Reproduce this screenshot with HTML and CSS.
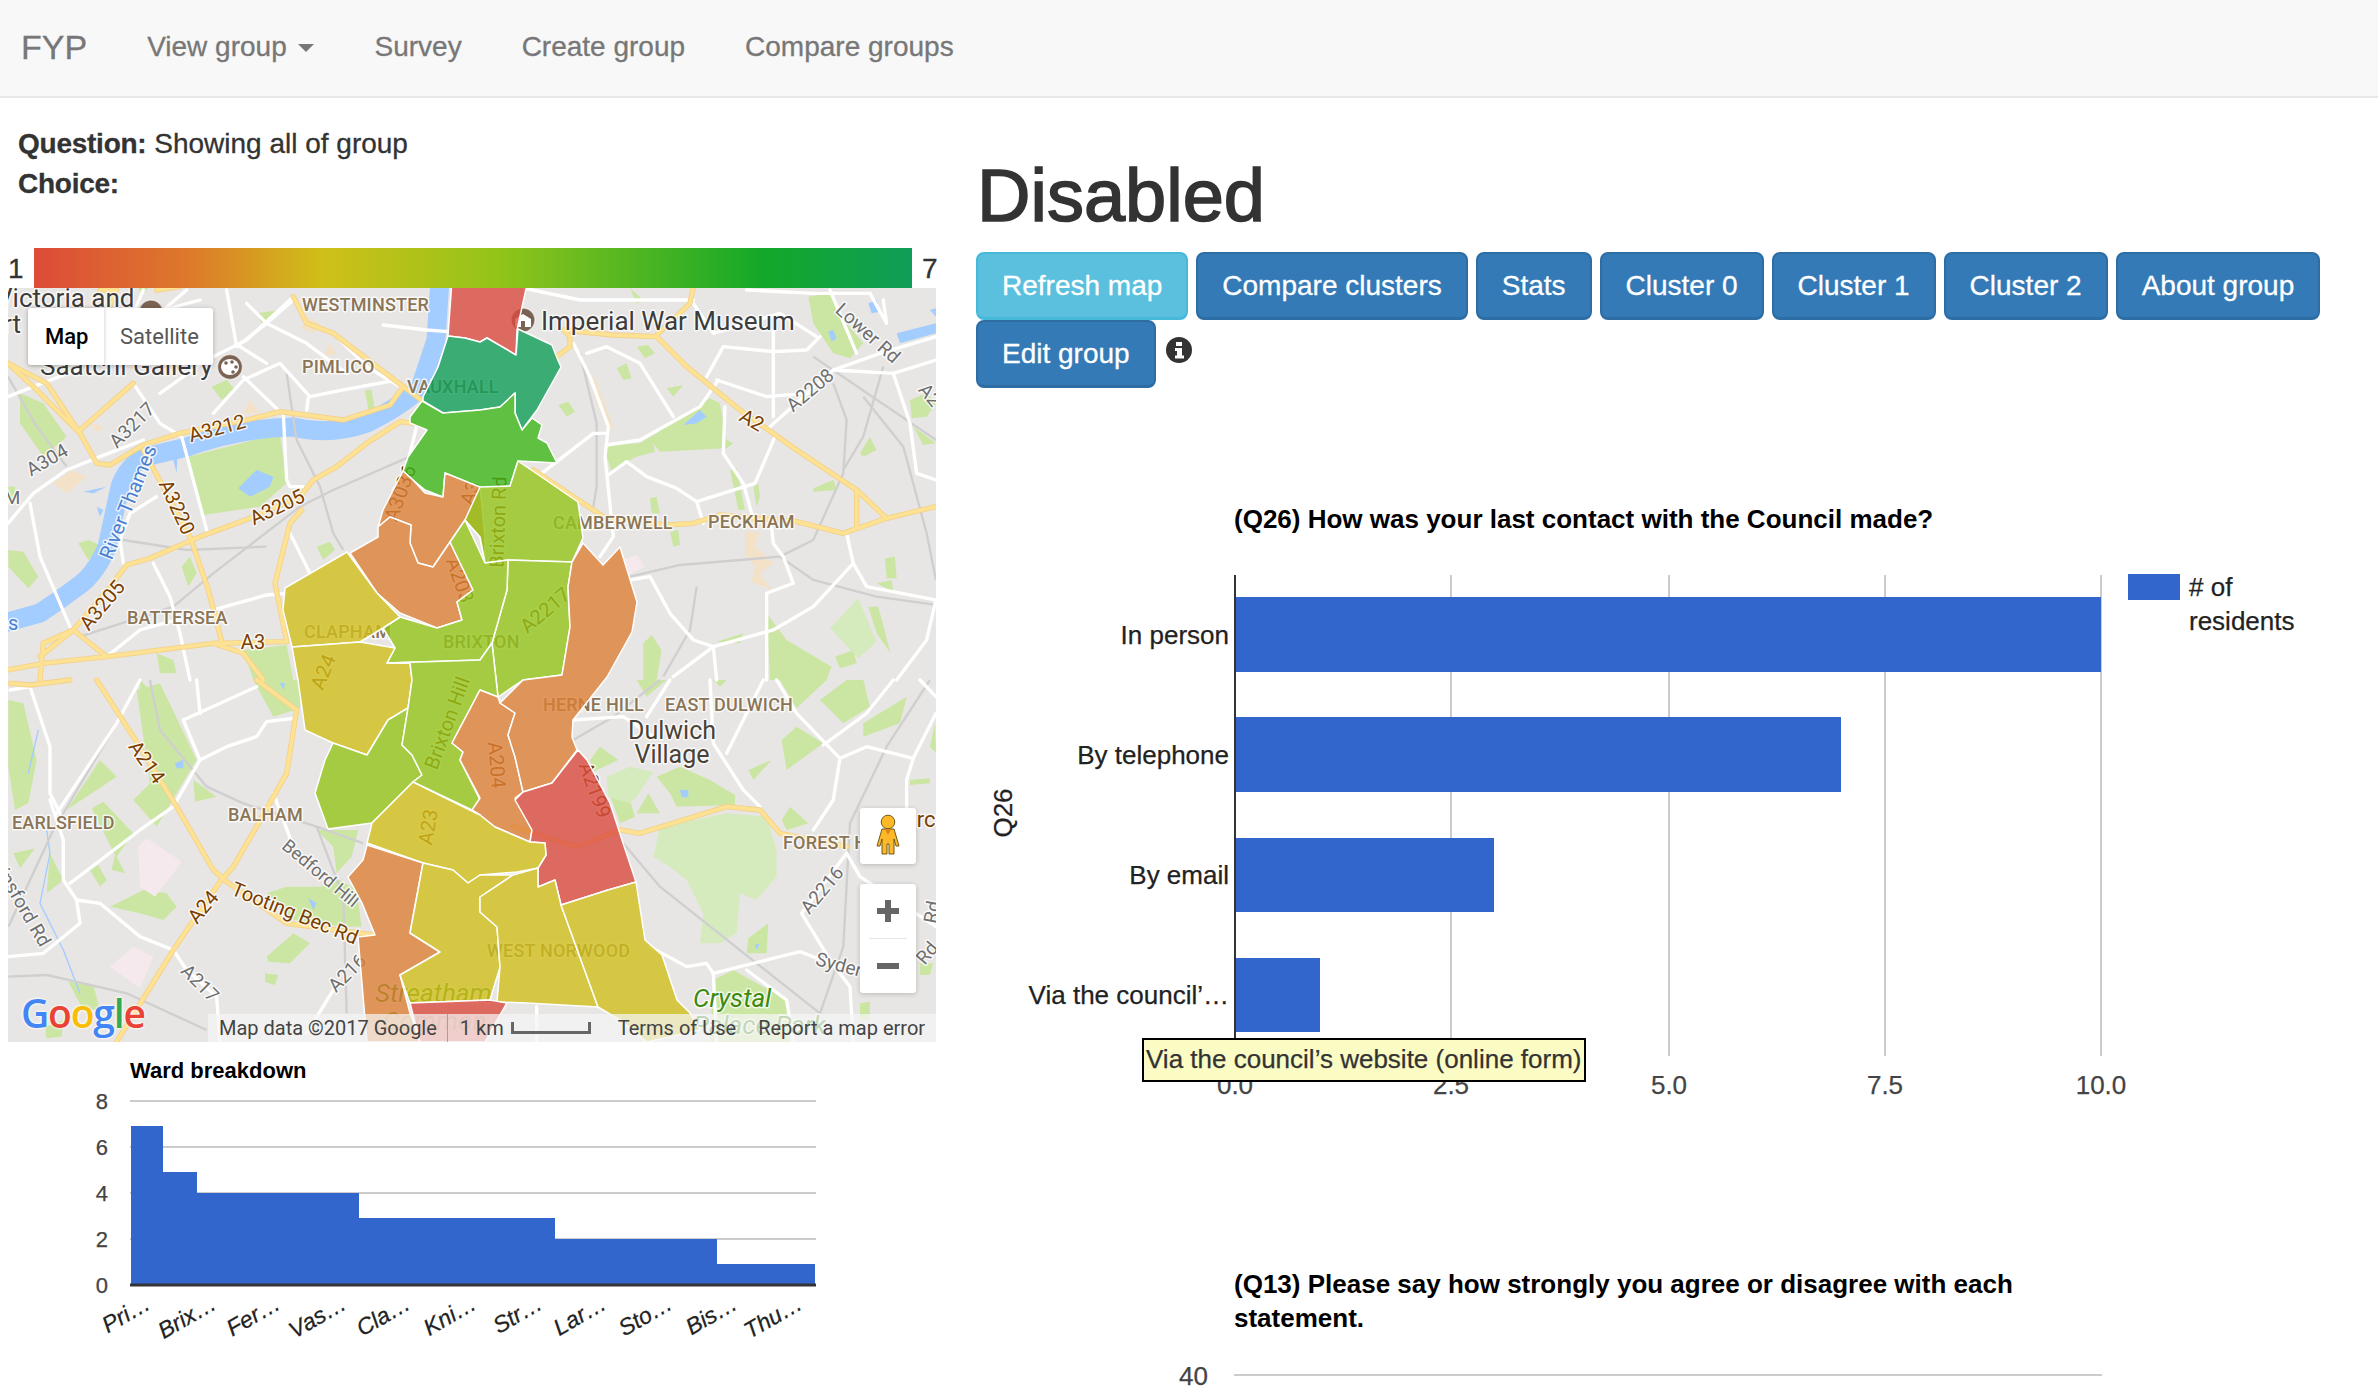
FILE: index.html
```html
<!DOCTYPE html>
<html lang="en">
<head>
<meta charset="utf-8">
<title>FYP</title>
<link rel="stylesheet" href="styles.css">
</head>
<body>
<nav class="navbar">
  <a class="brand">FYP</a>
  <a class="nav-link">View group <span class="caret"></span></a>
  <a class="nav-link">Survey</a>
  <a class="nav-link">Create group</a>
  <a class="nav-link">Compare groups</a>
</nav>
<main class="page">
  <section class="left">
    <div class="info">
      <div><b>Question:</b> Showing all of group</div>
      <div><b>Choice:</b></div>
    </div>
    <div class="scale"><span class="scale-min">1</span><div class="scale-bar"></div><span class="scale-max">7</span></div>
    <div class="map">
      <svg class="map-svg" width="928" height="754" viewBox="8 288 928 754" xmlns="http://www.w3.org/2000/svg">
        <defs>
          <g id="aroads">
            <g transform="translate(0,280) scale(.3333)">
              <path d="M24,250 L140,310 L240,460 L290,550 L330,555 L430,495 L540,460 L740,420 L840,395 L1030,420 L1170,375 L1210,320"/>
              <path d="M1240,430 L1200,425 L1100,490 L1010,560 L940,600 L900,650 L750,715 L600,770 L450,835 L380,855 L330,920 L220,1050 L130,1090 L120,1200"/>
              <path d="M430,510 L500,640 L570,770 L625,930 L665,1085"/>
              <path d="M120,1130 L220,1050 L320,1130 M320,1130 L640,1090 L860,1085 L825,910 L870,730 L905,690"/>
              <path d="M880,50 L920,130 L1000,160 L1210,320 L1270,365"/>
              <path d="M400,310 L240,450 M240,460 L100,320 L24,250"/>
              <path d="M640,1090 L730,1120 L790,1200"/>
              <path d="M24,1170 L130,1150 L320,1130"/>
              <path d="M470,30 L540,20 M300,30 L350,30 L320,100"/>
            </g>
            <g transform="translate(480,280) scale(.3333)">
              <path d="M230,230 L270,200 L270,170 L250,150 L400,165 L530,170 L620,260 L780,390 L950,510 L1130,630 L1220,715 L1368,680"/>
              <path d="M160,570 L370,710 L560,735 L640,730 L720,705 L950,725 L1090,760 L1220,715"/>
              <path d="M1130,630 L1130,740"/>
              <path d="M640,20 L630,70 L530,165"/>
            </g>
            <g transform="translate(0,680) scale(.3333)">
              <path d="M290,0 L400,170 L530,380 L640,570 L680,605 L860,730 L1120,765"/>
              <path d="M770,0 L890,90 L860,280 L770,440 L700,560 L660,605 L520,810 L350,1085"/>
              <path d="M30,10 L90,15 L210,0"/>
            </g>
            <g transform="translate(480,680) scale(.3333)">
              <path d="M420,450 L480,460 L740,380 L840,390 L900,460 L1100,500"/>
              <path d="M100,440 L290,500 L420,450"/>
            </g>
          </g>
        </defs>
        <rect class="base" x="8" y="288" width="928" height="754"/>

        <g class="park">
          <g transform="translate(0,280) scale(.3333)">
            <path d="M565,530 L840,460 L860,610 L780,680 L610,705Z"/>
            <path d="M60,340 L130,370 L200,470 L130,530 L60,430Z"/>
            <path d="M635,320 L680,300 L705,330 L665,360Z"/>
            <path d="M25,810 L70,815 L115,890 L85,925 L25,860Z"/>
            <path d="M235,790 L265,780 L310,800 L265,840Z"/>
            <path d="M950,800 L990,785 L1005,810 L970,840Z"/>
            <path d="M545,860 L570,830 L590,880 L565,920Z"/>
            <path d="M730,1110 L860,1095 L880,1200 L760,1200Z"/>
            <path d="M470,1120 L520,1140 L530,1180 L480,1180Z"/>
            <path d="M1095,330 L1115,330 L1125,390 L1105,390Z"/>
            <path d="M25,620 L45,620 L45,660 L25,660Z"/>
            <path d="M415,24 L445,24 L425,45Z"/>
            <path d="M770,100 L840,90 L790,140Z"/>
          </g>
          <g transform="translate(480,280) scale(.3333)">
            <path d="M985,50 L1050,40 L1100,130 L1150,190 L1110,235 L1060,220 L1000,130Z"/>
            <path d="M470,200 L505,195 L525,220 L495,235Z"/>
            <path d="M410,265 L440,250 L455,295 L430,300Z"/>
            <path d="M560,325 L610,315 L580,350Z"/>
            <path d="M235,375 L265,365 L285,395 L260,410Z"/>
            <path d="M380,495 L480,490 L530,460 L555,440 L690,355 L720,370 L725,400 L740,480 L760,490 L740,505 L540,515 L520,490 L525,515 L470,530 L440,545 L395,575 L380,530Z"/>
            <path d="M510,655 L530,650 L540,700 L515,700Z"/>
            <path d="M570,755 L595,750 L600,795 L580,800Z"/>
            <path d="M750,570 L770,565 L795,690 L775,690Z"/>
            <path d="M820,620 L835,610 L840,650 L830,680Z"/>
            <path d="M1000,625 L1060,600 L1070,630 L1000,635Z"/>
            <path d="M1290,360 L1340,340 L1368,370 L1340,410 L1295,415Z"/>
            <path d="M1300,440 L1368,490 L1330,495Z"/>
            <path d="M1170,470 L1190,510 L1150,530 L1140,520Z"/>
            <path d="M1215,835 L1245,830 L1250,895 L1220,895Z"/>
            <path d="M1190,910 L1235,900 L1240,935Z"/>
            <path d="M1165,980 L1195,980 L1232,1120 L1190,1060Z"/>
            <path d="M1065,1130 L1120,1110 L1130,1150 L1080,1165Z"/>
            <path d="M860,1000 L920,1080 L1055,1160 L1040,1200 L870,1200Z"/>
            <path d="M490,1090 L515,1065 L545,1110 L530,1200 L490,1200Z"/>
            <path d="M710,1085 L790,1060 L780,1090Z"/>
            <path d="M450,24 L490,60 L470,70Z"/>
          </g>
          <g transform="translate(0,680) scale(.3333)">
            <path d="M25,60 L70,70 L110,240 L85,370 L45,390 L25,260Z"/>
            <path d="M410,30 L480,10 L590,240 L530,340 L470,440 L400,360 L450,310Z"/>
            <path d="M580,300 L650,350 L585,365Z"/>
            <path d="M200,390 L300,240 L350,290Z"/>
            <path d="M275,385 L310,365 L400,460 L350,530 L375,580 L335,570 L345,525Z"/>
            <path d="M270,570 L295,555 L320,600 L300,620Z"/>
            <path d="M330,680 L430,630 L500,640 L530,680 L490,720 L420,700Z"/>
            <path d="M800,640 L860,620 L960,620 L1020,600 L1070,630 L1085,740 L1030,740 L880,720Z"/>
            <path d="M800,830 L880,760 L930,790 L870,850 L805,845Z"/>
            <path d="M795,880 L835,885 L825,915 L795,905Z"/>
            <path d="M950,450 L1075,450 L1055,530 L1010,580 L1000,500Z"/>
            <path d="M760,0 L900,0 L900,85 L820,110Z"/>
            <path d="M150,520 L190,600 L140,640Z"/>
            <path d="M40,520 L105,505 L60,565Z"/>
            <path d="M205,905 L280,915 L300,990 L250,990Z"/>
            <path d="M135,1040 L190,1020 L185,1070 L140,1075Z"/>
            <path d="M420,0 L450,30 L420,60Z"/>
          </g>
          <g transform="translate(480,680) scale(.3333)">
            <path d="M530,290 L600,260 L690,300 L765,345 L765,375 L590,380 L570,340Z"/>
            <path d="M330,240 L360,200 L415,240 L340,275Z"/>
            <path d="M390,345 L445,345 L465,410 L420,430Z"/>
            <path d="M470,400 L505,340 L540,400Z"/>
            <path d="M805,775 L865,730 L860,820 L800,820Z"/>
            <path d="M905,180 L950,140 L1030,190 L920,270Z"/>
            <path d="M805,270 L875,240 L820,300Z"/>
            <path d="M1020,60 L1100,0 L1150,0 L1170,80 L1090,130Z"/>
            <path d="M1150,130 L1280,50 L1260,130 L1150,170Z"/>
            <path d="M900,0 L1040,0 L950,85Z"/>
            <path d="M1290,300 L1350,295 L1350,310 L1290,315Z"/>
            <path d="M905,420 L930,380 L985,430 L920,450Z"/>
            <path d="M700,900 L760,870 L920,960 L930,1085 L690,1085Z"/>
            <path d="M1140,970 L1170,965 L1170,1020 L1140,1020Z"/>
            <path d="M1320,850 L1360,850 L1350,885 L1320,885Z"/>
            <path d="M1365,130 L1350,200 L1368,220Z"/>
            <path d="M470,0 L560,0 L500,50Z"/>
            <path d="M700,0 L740,0 L720,20Z"/>
          </g>
        </g>
        <g class="park-pale">
          <g transform="translate(480,280) scale(.3333)">
            <path d="M1050,1045 L1135,955 L1190,1085 L1135,1135Z"/>
          </g>
          <g transform="translate(480,680) scale(.3333)">
            <path d="M380,290 L450,260 L520,275 L470,350 L450,370 L385,350Z"/>
            <path d="M540,440 L740,400 L860,410 L890,510 L890,590 L830,660 L780,640 L770,760 L720,790 L660,790 L670,700 L620,600 L570,560 L520,530Z"/>
          </g>
        </g>
        <g class="pink">
          <g transform="translate(0,680) scale(.3333)">
            <path d="M415,500 L440,475 L545,545 L520,580 L465,650 L420,620Z"/>
            <path d="M330,860 L400,800 L460,830 L420,925Z"/>
          </g>
          <g transform="translate(480,280) scale(.3333)">
            <path d="M425,840 L470,825 L495,860 L445,885Z"/>
          </g>
        </g>
        <g class="sand">
          <g transform="translate(480,280) scale(.3333)">
            <path d="M795,755 L840,755 L825,800 L860,830 L880,850 L840,880 L875,930 L815,905 L825,860 L795,820Z"/>
            <path d="M340,280 L400,440 L385,455 L340,340Z"/>
          </g>
          <g transform="translate(0,280) scale(.3333)">
            <path d="M920,110 L960,130 L945,160 L905,145Z"/>
            <path d="M985,190 L1010,220 L975,230Z"/>
            <path d="M215,570 L260,590 L200,640 L160,610Z"/>
            <path d="M270,430 L310,440 L290,460Z"/>
            <path d="M750,360 L780,400 L730,400Z"/>
          </g>
        </g>

        <path class="water" d="M440,280 L436,340 L420,388 Q403,405 367,423 Q330,436 293,427 Q240,428 187,447 Q150,456 143,457 Q125,470 120,487 L107,547 Q95,575 77,587 Q60,600 40,613 L0,624"/>
        <g class="lake">
          <g transform="translate(0,280) scale(.3333)">
            <path d="M715,625 L770,570 L820,590 L810,620 L750,650Z"/>
            <path d="M250,635 L320,620 L280,640Z"/>
            <path d="M290,680 L310,690 L300,710Z"/>
            <path d="M520,540 L532,535 L530,580Z"/>
          </g>
          <g transform="translate(480,280) scale(.3333)">
            <path d="M610,435 L660,390 L680,410 L650,430Z"/>
            <path d="M1165,70 L1190,60 L1200,95 L1175,100Z"/>
            <path d="M1250,160 L1368,130 L1368,160 L1260,190Z"/>
            <path d="M1045,155 L1060,150 L1070,175 L1055,185Z"/>
            <path d="M1350,90 L1368,85 L1368,110Z"/>
          </g>
          <g transform="translate(0,680) scale(.3333)">
            <path d="M840,8 L855,10 L850,30Z"/>
            <path d="M525,250 L550,240 L550,265 L530,265Z"/>
            <path d="M925,655 L950,670 L940,690Z"/>
          </g>
          <g transform="translate(480,680) scale(.3333)">
            <path d="M600,330 L625,330 L625,352 L605,352Z"/>
            <path d="M825,795 L840,790 L830,810Z"/>
          </g>
        </g>
        <g class="stream">
          <g transform="translate(0,680) scale(.3333)">
            <path d="M115,150 L85,280"/>
            <path d="M140,450 L150,520 L120,670 L190,810 L240,940"/>
          </g>
        </g>

        <g class="rail">
          <g transform="translate(0,280) scale(.3333)">
            <path d="M860,280 L890,480 L960,620 L1000,760 L1030,810"/>
            <path d="M1230,530 L1000,630 L900,680 L640,880 L520,980 L240,1070"/>
            <path d="M24,290 L110,440 L200,560"/>
            <path d="M370,780 L560,810 L800,800"/>
          </g>
          <g transform="translate(480,280) scale(.3333)">
            <path d="M1000,230 L1368,480"/>
            <path d="M300,220 L350,430 L350,620 L340,680"/>
            <path d="M1060,310 L1100,420 L1090,580 L1000,780 L900,830 L600,855 L450,890"/>
            <path d="M1210,260 L1150,470 L1090,570"/>
            <path d="M1150,350 L1270,500 L1340,760 L1368,900"/>
            <path d="M650,920 L630,1050 L550,1190"/>
            <path d="M900,830 L1000,900 L1190,950 L1368,975"/>
          </g>
          <g transform="translate(0,680) scale(.3333)">
            <path d="M450,0 L480,150 L620,320 L730,370 L950,440 L1090,490"/>
            <path d="M350,130 L160,450 L25,740"/>
            <path d="M25,890 L140,885 L380,940 L620,1050"/>
            <path d="M950,440 L1030,650 L1040,1000"/>
          </g>
          <g transform="translate(480,680) scale(.3333)">
            <path d="M1350,0 L1220,200 L1110,430 L1090,800 L1020,1000"/>
            <path d="M430,490 L540,620 L830,850 L1020,1000"/>
            <path d="M280,180 L400,110 L540,0"/>
          </g>
        </g>

        <g class="road">
          <g transform="translate(0,280) scale(.3333)">
            <path d="M24,350 L100,320 L230,270"/>
            <path d="M400,310 L480,430 L545,470 L620,750"/>
            <path d="M24,730 L100,640 L200,570 L300,530 L430,480"/>
            <path d="M90,670 L120,830 L210,1040"/>
            <path d="M370,850 L360,780 L390,700 L470,650"/>
            <path d="M460,850 L510,950 L540,1060 L570,1200"/>
            <path d="M850,400 L860,600 L870,620 L910,620"/>
            <path d="M640,400 L730,300 L840,250 L930,350 L1030,330 L1190,300"/>
            <path d="M920,390 L925,355"/>
            <path d="M730,290 L840,395"/>
            <path d="M870,760 L930,880"/>
            <path d="M860,940 L800,945 L640,990 L420,1050 L320,1130"/>
            <path d="M680,30 L710,200 L800,130 L880,60"/>
            <path d="M1000,160 L1100,260 L1200,320"/>
            <path d="M740,70 L800,130 L920,190 L1040,280"/>
            <path d="M480,340 L620,240 L740,180 L880,50"/>
            <path d="M430,30 L400,100"/>
            <path d="M720,200 L800,250"/>
            <path d="M1150,135 L1280,150 L1345,155"/>
            <path d="M1250,440 L1230,520 L1215,570"/>
            <path d="M560,30 L490,90 L600,60"/>
          </g>
          <g transform="translate(480,280) scale(.3333)">
            <path d="M280,190 L330,290 L385,440 L375,530 L400,770 L360,830"/>
            <path d="M185,580 L340,460 L380,460"/>
            <path d="M380,495 L480,480 L660,380 L715,300"/>
            <path d="M320,220 L380,200 L480,250 L580,410"/>
            <path d="M710,300 L860,350 L980,340"/>
            <path d="M730,200 L680,290"/>
            <path d="M730,200 L880,215 L980,210 L1020,170"/>
            <path d="M880,150 L880,410"/>
            <path d="M1010,170 L900,100 L700,160 L640,70"/>
            <path d="M885,470 L825,610 L650,665 L590,625 L500,590 L440,545 L385,585"/>
            <path d="M650,665 L670,730"/>
            <path d="M735,380 L730,520 L790,610 L815,700"/>
            <path d="M870,440 L1060,270 L1200,220 L1368,170"/>
            <path d="M1060,270 L1240,280 L1368,240"/>
            <path d="M1120,850 L1000,980 L880,1050 L700,1100 L580,1190"/>
            <path d="M1120,850 L1160,920 L1368,960"/>
            <path d="M1100,760 L1120,850"/>
            <path d="M450,900 L510,890 L570,1000 L640,1080 L700,1100 L710,1200"/>
            <path d="M860,1200 L860,940 L940,910 L910,830 L880,790 L875,740"/>
            <path d="M1240,280 L1290,430 L1310,580 L1368,600"/>
            <path d="M1368,960 L1340,1080 L1250,1200"/>
            <path d="M1130,220 L1050,30"/>
            <path d="M1170,40 L1220,130 L1210,60"/>
            <path d="M130,24 L300,60 L640,60"/>
            <path d="M800,30 L1000,40 L1170,40"/>
          </g>
          <g transform="translate(0,680) scale(.3333)">
            <path d="M30,30 L90,20 L150,200 L150,340 L180,400"/>
            <path d="M150,360 L190,480 L190,600 L230,660 L300,670 L420,770 L520,810 L560,870 L650,950 L660,1085"/>
            <path d="M550,120 L770,20"/>
            <path d="M550,120 L600,240 L520,380 L420,450 L210,610"/>
            <path d="M600,240 L680,200 L770,170 L800,125 L880,115"/>
            <path d="M820,340 L880,500"/>
            <path d="M230,660 L240,730 L130,820 L25,830"/>
            <path d="M170,400 L350,130 L420,0"/>
            <path d="M590,0 L600,100"/>
            <path d="M1000,930 L920,1060"/>
          </g>
          <g transform="translate(480,680) scale(.3333)">
            <path d="M280,120 L430,110 L520,170"/>
            <path d="M500,110 L570,0"/>
            <path d="M690,0 L700,190 L790,330 L840,380"/>
            <path d="M850,0 L740,220"/>
            <path d="M890,0 L950,100 L1080,235 L1160,200 L1300,235 L1368,100"/>
            <path d="M1080,235 L1060,360 L1000,450"/>
            <path d="M1030,195 L1160,100 L1240,0"/>
            <path d="M1300,235 L1280,300 L1280,400"/>
            <path d="M510,800 L620,860 L680,850 L700,880 L960,815 L1050,850 L1140,870"/>
            <path d="M700,880 L710,1085"/>
            <path d="M800,870 L920,960 L940,1085"/>
            <path d="M965,700 L1050,840 L1110,920 L1120,1085"/>
            <path d="M965,700 L1100,520"/>
            <path d="M1100,520 L1140,590 L1368,740"/>
            <path d="M170,980 L170,1085"/>
            <path d="M1320,0 L1368,50"/>
          </g>
        </g>
        <use href="#aroads" class="aroad-edge"/>
        <use href="#aroads" class="aroad"/>

        <circle class="poi" cx="151" cy="312" r="12"/>
        <circle class="poi" cx="230" cy="367" r="12.5"/>
        <ellipse class="poi-white" cx="230" cy="367" rx="9" ry="8"/>
        <circle class="poi-hole" cx="226" cy="363" r="1.8"/><circle class="poi-hole" cx="232" cy="362" r="1.8"/><circle class="poi-hole" cx="236" cy="367" r="1.8"/><circle class="poi-hole" cx="233" cy="372" r="1.8"/>
        <circle class="poi" cx="523" cy="320" r="12"/>
        <path class="poi-white" d="M515,319 L523,314 L531,319 L531,327 L515,327Z"/>
        <rect class="poi-hole" x="521" y="321" width="4" height="6"/>

        <text class="lbl-place" x="-4" y="307">Victoria and</text>
        <text class="lbl-place" x="-14" y="333">Art</text>
        <text class="lbl-place" x="40" y="375">Saatchi Gallery</text>
        <text class="lbl-place" x="541" y="330">Imperial War Museum</text>
        <text class="lbl-village" x="672" y="739">Dulwich</text>
        <text class="lbl-village" x="672" y="763">Village</text>
        <text class="lbl-park" x="693" y="1007">Crystal</text>
        <text class="lbl-park" x="693" y="1034">Palace Park</text>
        <text class="lbl-park lbl-park-dark" x="375" y="1002">Streatham</text>
        <text class="lbl-park lbl-park-dark" x="383" y="1030">Common</text>

        <text class="lbl-hood" x="302" y="311">WESTMINSTER</text>
        <text class="lbl-hood" x="302" y="373">PIMLICO</text>
        <text class="lbl-hood" x="407" y="393">VAUXHALL</text>
        <text class="lbl-hood" x="127" y="624">BATTERSEA</text>
        <text class="lbl-hood" x="304" y="638">CLAPHAM</text>
        <text class="lbl-hood" x="443" y="648">BRIXTON</text>
        <text class="lbl-hood" x="553" y="529">CAMBERWELL</text>
        <text class="lbl-hood" x="708" y="528">PECKHAM</text>
        <text class="lbl-hood" x="12" y="829">EARLSFIELD</text>
        <text class="lbl-hood" x="228" y="821">BALHAM</text>
        <text class="lbl-hood" x="543" y="711">HERNE HILL</text>
        <text class="lbl-hood" x="665" y="711">EAST DULWICH</text>
        <text class="lbl-hood" x="783" y="849">FOREST HILL</text>
        <text class="lbl-hood" x="487" y="957">WEST NORWOOD</text>

        <text class="lbl-shield" transform="rotate(-15 217 428)" x="217" y="428">A3212</text>
        <text class="lbl-shield" transform="rotate(65 177 507)" x="177" y="507">A3220</text>
        <text class="lbl-shield" transform="rotate(-25 277 507)" x="277" y="507">A3205</text>
        <text class="lbl-shield" transform="rotate(-50 102 605)" x="102" y="605">A3205</text>
        <text class="lbl-shield" x="253" y="642">A3</text>
        <text class="lbl-shield" transform="rotate(30 752 420)" x="752" y="420">A2</text>
        <text class="lbl-shield" transform="rotate(55 147 762)" x="147" y="762">A214</text>
        <text class="lbl-shield" transform="rotate(-50 203 907)" x="203" y="907">A24</text>
        <text class="lbl-shield" transform="rotate(22 295 913)" x="295" y="913">Tooting Bec Rd</text>
        <text class="lbl-shield" transform="rotate(-68 323 672)" x="323" y="672">A24</text>
        <text class="lbl-shield" transform="rotate(-80 428 827)" x="428" y="827">A23</text>
        <text class="lbl-shield" transform="rotate(85 497 765)" x="497" y="765">A204</text>
        <text class="lbl-shield" transform="rotate(70 595 790)" x="595" y="790">A2199</text>
        <text class="lbl-shield" transform="rotate(-70 447 723)" x="447" y="723">Brixton Hill</text>
        <text class="lbl-shield" transform="rotate(-88 498 522)" x="498" y="522">Brixton Rd</text>
        <text class="lbl-shield" transform="rotate(-70 400 493)" x="400" y="493">A3036</text>
        <text class="lbl-shield" transform="rotate(-70 470 493)" x="470" y="493">A3</text>
        <text class="lbl-shield" transform="rotate(70 460 580)" x="460" y="580">A203</text>
        <text class="lbl-shield" transform="rotate(-40 545 610)" x="545" y="610">A2217</text>
        <text class="lbl-road" transform="rotate(-45 132 425)" x="132" y="425">A3217</text>
        <text class="lbl-road" transform="rotate(-30 47 460)" x="47" y="460">A304</text>
        <text class="lbl-road" transform="rotate(-40 810 390)" x="810" y="390">A2208</text>
        <text class="lbl-road" transform="rotate(42 868 333)" x="868" y="333">Lower Rd</text>
        <text class="lbl-road" transform="rotate(50 930 395)" x="930" y="395">A2</text>
        <text class="lbl-road lbl-road-sm" transform="rotate(40 321 873)" x="321" y="873">Bedford Hill</text>
        <text class="lbl-road" transform="rotate(45 200 983)" x="200" y="983">A217</text>
        <text class="lbl-road" transform="rotate(-45 347 973)" x="347" y="973">A216</text>
        <text class="lbl-road" transform="rotate(-50 822 890)" x="822" y="890">A2216</text>
        <text class="lbl-road" transform="rotate(15 859 970)" x="859" y="970">Sydenham</text>
        <text class="lbl-road" transform="rotate(-50 927 953)" x="927" y="953">Rd</text>
        <text class="lbl-road" transform="rotate(-80 932 912)" x="932" y="912">Rd</text>
        <text class="lbl-road" transform="rotate(60 20 900)" x="20" y="900">Trinsford Rd</text>
        <text class="lbl-road" x="12" y="497">M</text>
        <text class="lbl-river" transform="rotate(-68 128 502)" x="128" y="502">River Thames</text>
        <text class="lbl-river lbl-river-start" x="-54" y="623">Thames</text>
        <text class="lbl-circus" x="897" y="827">Circus</text>

        <g class="wards">
          <path class="w-red" d="M452,280 L528,280 L517,330 L516,355 L487,338 L480,342 L465,338 L448,336Z"/>
          <path class="w-teal" d="M448,336 L438,367 L423,397 L423,401 L443,413 L480,410 L500,407 L515,393 L515,413 L522,430 L537,410 L561,367 L557,358 L552,345 L518,329 L516,355 L487,338 L480,342 L465,338Z"/>
          <path class="w-green" d="M410,417 L422,401 L443,413 L480,410 L500,407 L515,393 L515,413 L522,430 L532,418 L542,425 L538,438 L547,443 L557,463 L518,461 L510,486 L480,488 L445,473 L443,497 L425,490 L413,480 L403,471 L408,457 L427,430 L410,423Z"/>
          <path class="w-orange" d="M403,471 L413,480 L425,493 L443,497 L445,473 L480,487 L485,537 L485,563 L480,537 L465,520 L450,542 L433,567 L418,563 L410,543 L411,525 L390,517 L378,527 L383,510Z"/>
          <path class="w-orange" d="M450,542 L473,590 L457,602 L462,620 L437,628 L400,613 L377,593 L350,553 L378,537 L378,527 L390,517 L411,525 L410,543 L418,563 L433,567Z"/>
          <path class="w-lime" d="M518,461 L578,502 L583,538 L572,562 L508,560 L485,563 L480,537 L465,520 L480,487 L510,486Z"/>
          <path class="w-lime" d="M508,560 L572,562 L568,587 L570,627 L562,675 L523,680 L498,697 L492,643 L507,590Z"/>
          <path class="w-lime" d="M473,590 L457,602 L462,620 L437,628 L400,617 L383,628 L395,648 L387,663 L480,660 L492,643 L507,590 L508,560 L485,563 L465,520 L450,542Z"/>
          <path class="w-yellow" d="M285,588 L347,552 L377,593 L400,617 L383,628 L360,642 L292,647 L283,610Z"/>
          <path class="w-yellow" d="M292,647 L360,642 L395,648 L387,663 L410,663 L412,680 L408,708 L388,720 L367,755 L333,743 L305,730 L302,708 L298,680Z"/>
          <path class="w-lime" d="M367,755 L388,720 L408,708 L402,745 L412,755 L422,775 L413,782 L372,823 L328,829 L315,793 L325,760 L333,743Z"/>
          <path class="w-lime" d="M412,680 L408,708 L402,745 L412,755 L422,775 L413,782 L472,810 L480,800 L460,760 L463,752 L452,743 L480,690 L498,697 L492,643 L480,660 L387,663 L410,663Z"/>
          <path class="w-orange" d="M480,690 L452,743 L463,752 L460,760 L480,798 L472,810 L480,815 L495,827 L530,842 L532,830 L515,798 L523,792 L515,757 L508,735 L515,713 L500,703 L498,697Z"/>
          <path class="w-orange" d="M583,543 L603,565 L620,547 L637,602 L632,632 L607,677 L573,720 L572,737 L577,750 L552,783 L523,792 L515,757 L508,735 L515,713 L500,703 L523,680 L562,675 L570,627 L568,587 L572,562Z"/>
          <path class="w-red" d="M578,750 L552,783 L523,792 L515,800 L532,830 L530,842 L545,843 L546,855 L538,868 L538,887 L555,880 L561,905 L608,890 L636,882 L623,843 L610,803 L587,760Z"/>
          <path class="w-yellow" d="M413,782 L372,823 L367,843 L423,863 L453,870 L468,883 L480,875 L517,872 L538,868 L546,855 L545,843 L530,842 L495,827 L480,815Z"/>
          <path class="w-orange" d="M367,845 L423,863 L410,933 L440,952 L400,975 L410,1013 L420,1042 L367,1042 L358,937 L375,935 L362,903 L348,877 L363,860Z"/>
          <path class="w-yellow" d="M423,863 L453,870 L468,883 L480,875 L513,875 L480,897 L480,912 L497,927 L500,967 L490,1000 L410,1003 L400,975 L440,952 L410,933Z"/>
          <path class="w-yellow" d="M480,897 L513,875 L538,868 L538,887 L555,880 L561,905 L598,1007 L527,1003 L497,1002 L500,967 L497,927 L480,912Z"/>
          <path class="w-yellow" d="M561,905 L608,890 L636,882 L645,940 L662,955 L677,1000 L690,1013 L700,1030 L647,1042 L620,1020 L598,1007Z"/>
          <path class="w-red" d="M410,1003 L490,1000 L507,1003 L493,1027 L485,1042 L420,1042Z"/>
        </g>
      </svg>

      <div class="map-type"><span class="map-type-on">Map</span><span class="map-type-off">Satellite</span></div>
      <div class="pegman">
        <svg width="56" height="56" viewBox="0 0 56 56" xmlns="http://www.w3.org/2000/svg">
          <circle class="peg-body" cx="28" cy="14" r="6.8"/>
          <path class="peg-body" d="M22,21 L34,21 L39,38 L36,38 L34,31 L34,46 L29,46 L29,36 L27,36 L27,46 L22,46 L22,31 L20,38 L17,38Z"/>
          <path class="peg-tie" d="M25,21 L31,21 L28,27Z"/>
        </svg>
      </div>
      <div class="zoom">
        <div class="zoom-btn"><svg width="22" height="22" viewBox="0 0 22 22" xmlns="http://www.w3.org/2000/svg"><path class="zoom-ico" d="M8,0 H14 V8 H22 V14 H14 V22 H8 V14 H0 V8 H8Z"/></svg></div>
        <div class="zoom-sep"></div>
        <div class="zoom-btn"><svg width="22" height="6" viewBox="0 0 22 6" xmlns="http://www.w3.org/2000/svg"><rect class="zoom-ico" width="22" height="6"/></svg></div>
      </div>
      <div class="google"><span class="g-b">G</span><span class="g-r">o</span><span class="g-y">o</span><span class="g-b">g</span><span class="g-g">l</span><span class="g-r">e</span></div>
      <div class="attrib">
        <span class="attrib-data">Map data ©2017 Google</span>
        <span class="attrib-scale">1 km<span class="scalebar"></span></span>
        <span class="attrib-item">Terms of Use</span>
        <span class="attrib-item">Report a map error</span>
      </div>
    </div>

    <svg class="chart" width="928" height="344" viewBox="8 1042 928 344" xmlns="http://www.w3.org/2000/svg">
      <text class="c-title-sm" x="130" y="1078">Ward breakdown</text>
      <path class="c-grid" d="M130,1101 H816 M130,1147 H816 M130,1193 H816 M130,1239 H816"/>
      <path class="c-bar" d="M131,1285 V1126 H163 V1172 H197 V1193 H359 V1218 H555 V1239 H717 V1264 H815 V1285Z"/>
      <path class="c-axis" d="M130,1285 H816"/>
      <text class="c-tick-sm" x="108" y="1109">8</text>
      <text class="c-tick-sm" x="108" y="1155">6</text>
      <text class="c-tick-sm" x="108" y="1201">4</text>
      <text class="c-tick-sm" x="108" y="1247">2</text>
      <text class="c-tick-sm" x="108" y="1293">0</text>
      <text class="c-xlab" transform="rotate(-30 152 1308)" x="152" y="1308">Pri…</text>
      <text class="c-xlab" transform="rotate(-30 218 1308)" x="218" y="1308">Brix…</text>
      <text class="c-xlab" transform="rotate(-30 282 1308)" x="282" y="1308">Fer…</text>
      <text class="c-xlab" transform="rotate(-30 348 1308)" x="348" y="1308">Vas…</text>
      <text class="c-xlab" transform="rotate(-30 412 1308)" x="412" y="1308">Cla…</text>
      <text class="c-xlab" transform="rotate(-30 478 1308)" x="478" y="1308">Kni…</text>
      <text class="c-xlab" transform="rotate(-30 544 1308)" x="544" y="1308">Str…</text>
      <text class="c-xlab" transform="rotate(-30 608 1308)" x="608" y="1308">Lar…</text>
      <text class="c-xlab" transform="rotate(-30 674 1308)" x="674" y="1308">Sto…</text>
      <text class="c-xlab" transform="rotate(-30 739 1308)" x="739" y="1308">Bis…</text>
      <text class="c-xlab" transform="rotate(-30 804 1308)" x="804" y="1308">Thu…</text>
    </svg>
  </section>

  <section class="right">
    <h1 class="title">Disabled</h1>
    <div class="buttons">
      <a class="btn btn-info">Refresh map</a>
      <a class="btn">Compare clusters</a>
      <a class="btn">Stats</a>
      <a class="btn">Cluster 0</a>
      <a class="btn">Cluster 1</a>
      <a class="btn">Cluster 2</a>
      <a class="btn">About group</a>
      <a class="btn">Edit group</a>
      <svg class="info-icon" width="26" height="26" viewBox="0 0 26 26" xmlns="http://www.w3.org/2000/svg">
        <circle class="info-disc" cx="13" cy="13" r="13"/>
        <path class="info-i" d="M10,5 H16 V9 H10Z M9,11 H16 V18.5 H18 V21.5 H9 V18.5 H11 V14 H9Z"/>
      </svg>
    </div>
    <svg class="chart" width="1402" height="998" viewBox="976 388 1402 998" xmlns="http://www.w3.org/2000/svg">
      <text class="c-title" x="1234" y="528">(Q26) How was your last contact with the Council made?</text>
      <path class="c-vgrid" d="M1451,575 V1056 M1669,575 V1056 M1885,575 V1056 M2101,575 V1056"/>
      <rect class="c-bar" x="1235" y="597" width="866" height="75"/>
      <rect class="c-bar" x="1235" y="717" width="606" height="75"/>
      <rect class="c-bar" x="1235" y="838" width="259" height="74"/>
      <rect class="c-bar" x="1235" y="958" width="85" height="74"/>
      <path class="c-vaxis" d="M1235,575 V1056"/>
      <text class="c-row" x="1229" y="644">In person</text>
      <text class="c-row" x="1229" y="764">By telephone</text>
      <text class="c-row" x="1229" y="884">By email</text>
      <text class="c-row" x="1229" y="1004">Via the council’…</text>
      <text class="c-ylab" transform="rotate(-90 1012 813)" x="1012" y="813">Q26</text>
      <text class="c-tick" x="1235" y="1094">0.0</text>
      <text class="c-tick" x="1451" y="1094">2.5</text>
      <text class="c-tick" x="1669" y="1094">5.0</text>
      <text class="c-tick" x="1885" y="1094">7.5</text>
      <text class="c-tick" x="2101" y="1094">10.0</text>
      <rect class="c-bar" x="2128" y="574" width="52" height="26"/>
      <text class="c-legend" x="2189" y="596">#&#160;of</text>
      <text class="c-legend" x="2189" y="630">residents</text>
      <rect class="c-tip" x="1143" y="1039" width="442" height="42"/>
      <text class="c-tiptext" x="1146" y="1068">Via the council’s website (online form)</text>
      <text class="c-title" x="1234" y="1293">(Q13) Please say how strongly you agree or disagree with each</text>
      <text class="c-title" x="1234" y="1327">statement.</text>
      <path class="c-grid" d="M1234,1375 H2102"/>
      <text class="c-tick-40" x="1208" y="1385">40</text>
    </svg>
  </section>
</main>
</body>
</html>
```
FILE: styles.css
```css
* { box-sizing: border-box; }
html, body { margin: 0; padding: 0; height: 1386px; overflow: hidden; background: #fff; }
body { font-family: "Liberation Sans", Arial, sans-serif; font-size: 28px; line-height: 40px; color: #333; }

.navbar { display: flex; align-items: center; height: 98px; padding: 0 0 3px 21px; background: #f8f8f8; border-bottom: 2px solid #e7e7e7; color: #777; -webkit-text-stroke: .3px #777; }
.brand { font-size: 34px; padding-right: 30px; }
.nav-link { padding: 0 30px; }
.caret { display: inline-block; width: 0; height: 0; margin-left: 4px; vertical-align: middle; border-top: 8px solid #777; border-left: 8px solid transparent; border-right: 8px solid transparent; }

.page { display: flex; align-items: flex-start; }
.left { flex: 0 0 960px; padding-left: 8px; }
.right { flex: 1; padding-left: 16px; }

.info { padding: 26px 0 0 10px; height: 150px; -webkit-text-stroke: .3px #333; }
.info b { font-weight: 700; letter-spacing: -.25px; }
.scale { display: flex; width: 928px; height: 40px; line-height: 42px; -webkit-text-stroke: .3px #333; }
.scale-min { width: 26px; }
.scale-max { width: 24px; padding-left: 10px; }
.scale-bar { width: 878px; background: linear-gradient(to right, #dd4b39 0%, #dd7a2a 18%, #cfc018 33%, #92c41a 53%, #13a829 83%, #0f9d58 100%); }

.map { position: relative; width: 928px; height: 754px; overflow: hidden; font-family: Roboto, "Liberation Sans", sans-serif; }
.map-svg { display: block; }
.base { fill: #e8e6e4; }
.park path { fill: #cbe6a3; }
.park-pale path { fill: #d6ebbd; }
.pink path { fill: #f6e9ee; }
.sand path { fill: #f3e2c8; }
.water { fill: none; stroke: #a3ccff; stroke-width: 19; stroke-linejoin: round; }
.lake path { fill: #a3ccff; }
.stream path { fill: none; stroke: #a3ccff; stroke-width: 4; }
.rail path { fill: none; stroke: #cfcfcf; stroke-width: 7; stroke-linejoin: round; }
.road path { fill: none; stroke: #fff; stroke-width: 10; stroke-linejoin: round; stroke-linecap: round; }
#aroads path { fill: none; stroke-linejoin: round; stroke-linecap: round; }
.aroad-edge { stroke: #f3d08a; stroke-width: 16; }
.aroad { stroke: #fde293; stroke-width: 11; }
.poi { fill: #7b6354; stroke: #fff; stroke-opacity: .6; stroke-width: 1.5; }
.poi-white { fill: #fff; }
.poi-hole { fill: #7b6354; }

.map-svg text { paint-order: stroke; stroke: rgba(255,255,255,.75); stroke-width: 3px; stroke-linejoin: round; font-family: Roboto, "Liberation Sans", sans-serif; }
.lbl-place { font-size: 26px; fill: #3c3c3c; }
.lbl-village { font-size: 25px; fill: #4a4236; text-anchor: middle; }
.lbl-park { font-size: 26px; font-style: italic; fill: #3c8a10; }
.lbl-park-dark { fill: #3c8a10; }
.lbl-hood { font-size: 18px; font-weight: 500; letter-spacing: .2px; fill: #8a7556; }
.lbl-shield { font-size: 20px; fill: #7a3e00; text-anchor: middle; dominant-baseline: central; }
.lbl-road { font-size: 19px; fill: #6f6f6f; text-anchor: middle; dominant-baseline: central; }
.lbl-road-sm { font-size: 18px; }
.lbl-river { font-size: 20px; fill: #4a7fd0; text-anchor: middle; dominant-baseline: central; }
.lbl-river-start { text-anchor: start; }
.lbl-circus { font-size: 22px; fill: #7a3e00; }

.wards path { stroke: #fff; stroke-width: 1.5; stroke-linejoin: round; fill-opacity: .8; }
.w-red { fill: #da4b3e; }
.w-teal { fill: #0f9d58; }
.w-green { fill: #3cb618; }
.w-orange { fill: #dc8036; }
.w-lime { fill: #94c41a; }
.w-yellow { fill: #cfbe1c; }

.map-type { position: absolute; left: 20px; top: 20px; display: flex; height: 57px; background: #fff; border-radius: 3px; box-shadow: 0 1px 5px rgba(0,0,0,.25); font-size: 22px; line-height: 57px; }
.map-type-on { width: 76px; padding-left: 17px; color: #000; font-weight: 500; box-shadow: 1px 0 3px rgba(0,0,0,.15); }
.map-type-off { width: 109px; padding-left: 16px; color: #565656; }
.pegman { position: absolute; left: 852px; top: 520px; width: 56px; height: 56px; background: #fff; border-radius: 3px; box-shadow: 0 1px 5px rgba(0,0,0,.2); }
.pegman svg { display: block; }
.peg-body { fill: #fdb827; stroke: #6f5a18; stroke-width: 1; }
.peg-tie { fill: #e2821b; }
.zoom { position: absolute; left: 852px; top: 596px; width: 56px; height: 109px; background: #fff; border-radius: 3px; box-shadow: 0 1px 5px rgba(0,0,0,.2); display: flex; flex-direction: column; align-items: center; }
.zoom-btn { height: 54px; width: 56px; display: flex; align-items: center; justify-content: center; }
.zoom-sep { width: 38px; height: 1px; background: #e6e6e6; flex: none; }
.zoom-ico { fill: #666; }
.google { position: absolute; left: 13px; top: 697px; font-family: "Open Sans", Roboto, sans-serif; font-size: 39px; line-height: 56px; font-weight: 600; letter-spacing: -1.2px; text-shadow: 0 0 3px #fff, 0 0 3px #fff; }
.g-b { color: #4285f4; }
.g-r { color: #ea4335; }
.g-y { color: #fbbc05; }
.g-g { color: #34a853; }
.attrib { position: absolute; left: 200px; right: 0; top: 726px; height: 28px; display: flex; align-items: center; background: rgba(245,245,245,.72); color: #444; font-size: 20px; line-height: 28px; white-space: nowrap; }
.attrib-data { margin-left: 11px; }
.attrib-scale { display: flex; align-items: center; margin-left: 10px; padding-left: 12px; border-left: 1px solid #d88; }
.scalebar { display: inline-block; width: 80px; height: 12px; margin: 0 0 0 7px; border: 3px solid #666; border-top: 0; }
.attrib-item { margin-left: 27px; }
.attrib-item + .attrib-item { margin-left: 22px; }

.chart { display: block; }
.chart text { font-family: "Liberation Sans", Arial, sans-serif; }
.c-title-sm { font-size: 22px; font-weight: 700; fill: #000; }
.c-title { font-size: 26px; font-weight: 700; fill: #000; }
.c-grid { fill: none; stroke: #ccc; stroke-width: 2; }
.c-axis { fill: none; stroke: #333; stroke-width: 3; }
.c-vgrid { fill: none; stroke: #ccc; stroke-width: 2; }
.c-vaxis { fill: none; stroke: #333; stroke-width: 2; }
.c-bar { fill: #3366cc; }
.c-tick-sm { font-size: 22px; fill: #444; stroke: #444; stroke-width: .25; text-anchor: end; }
.c-xlab { font-size: 23px; font-style: italic; fill: #222; stroke: #222; stroke-width: .25; text-anchor: end; }
.c-tick { font-size: 26px; fill: #444; stroke: #444; stroke-width: .25; text-anchor: middle; }
.c-tick-40 { font-size: 26px; fill: #444; stroke: #444; stroke-width: .25; text-anchor: end; }
.c-row { font-size: 26px; fill: #222; stroke: #222; stroke-width: .25; text-anchor: end; }
.c-ylab { font-size: 26px; fill: #222; stroke: #222; stroke-width: .25; text-anchor: middle; }
.c-legend { font-size: 26px; fill: #222; stroke: #222; stroke-width: .25; }
.c-tip { fill: #fbfbc4; stroke: #000; stroke-width: 2; }
.c-tiptext { font-size: 26px; fill: #333; stroke: #333; stroke-width: .25; }

.title { margin: 58px 0 16px; padding-left: 1px; font-size: 74px; line-height: 80px; font-weight: 400; -webkit-text-stroke: 1.6px #333; color: #333; }
.buttons { display: flex; flex-wrap: wrap; column-gap: 8px; width: 1400px; }
.btn { display: flex; align-items: center; height: 68px; padding: 0 24px; border: 2px solid #2e6da4; border-bottom-width: 3px; border-radius: 8px; background: #337ab7; color: #fff; -webkit-text-stroke: .3px #fff; }
.btn-info { background: #5bc0de; border-color: #46b8da; }
.info-icon { margin: 17px 0 0 2px; }
.info-disc { fill: #333; }
.info-i { fill: #fff; }
```
